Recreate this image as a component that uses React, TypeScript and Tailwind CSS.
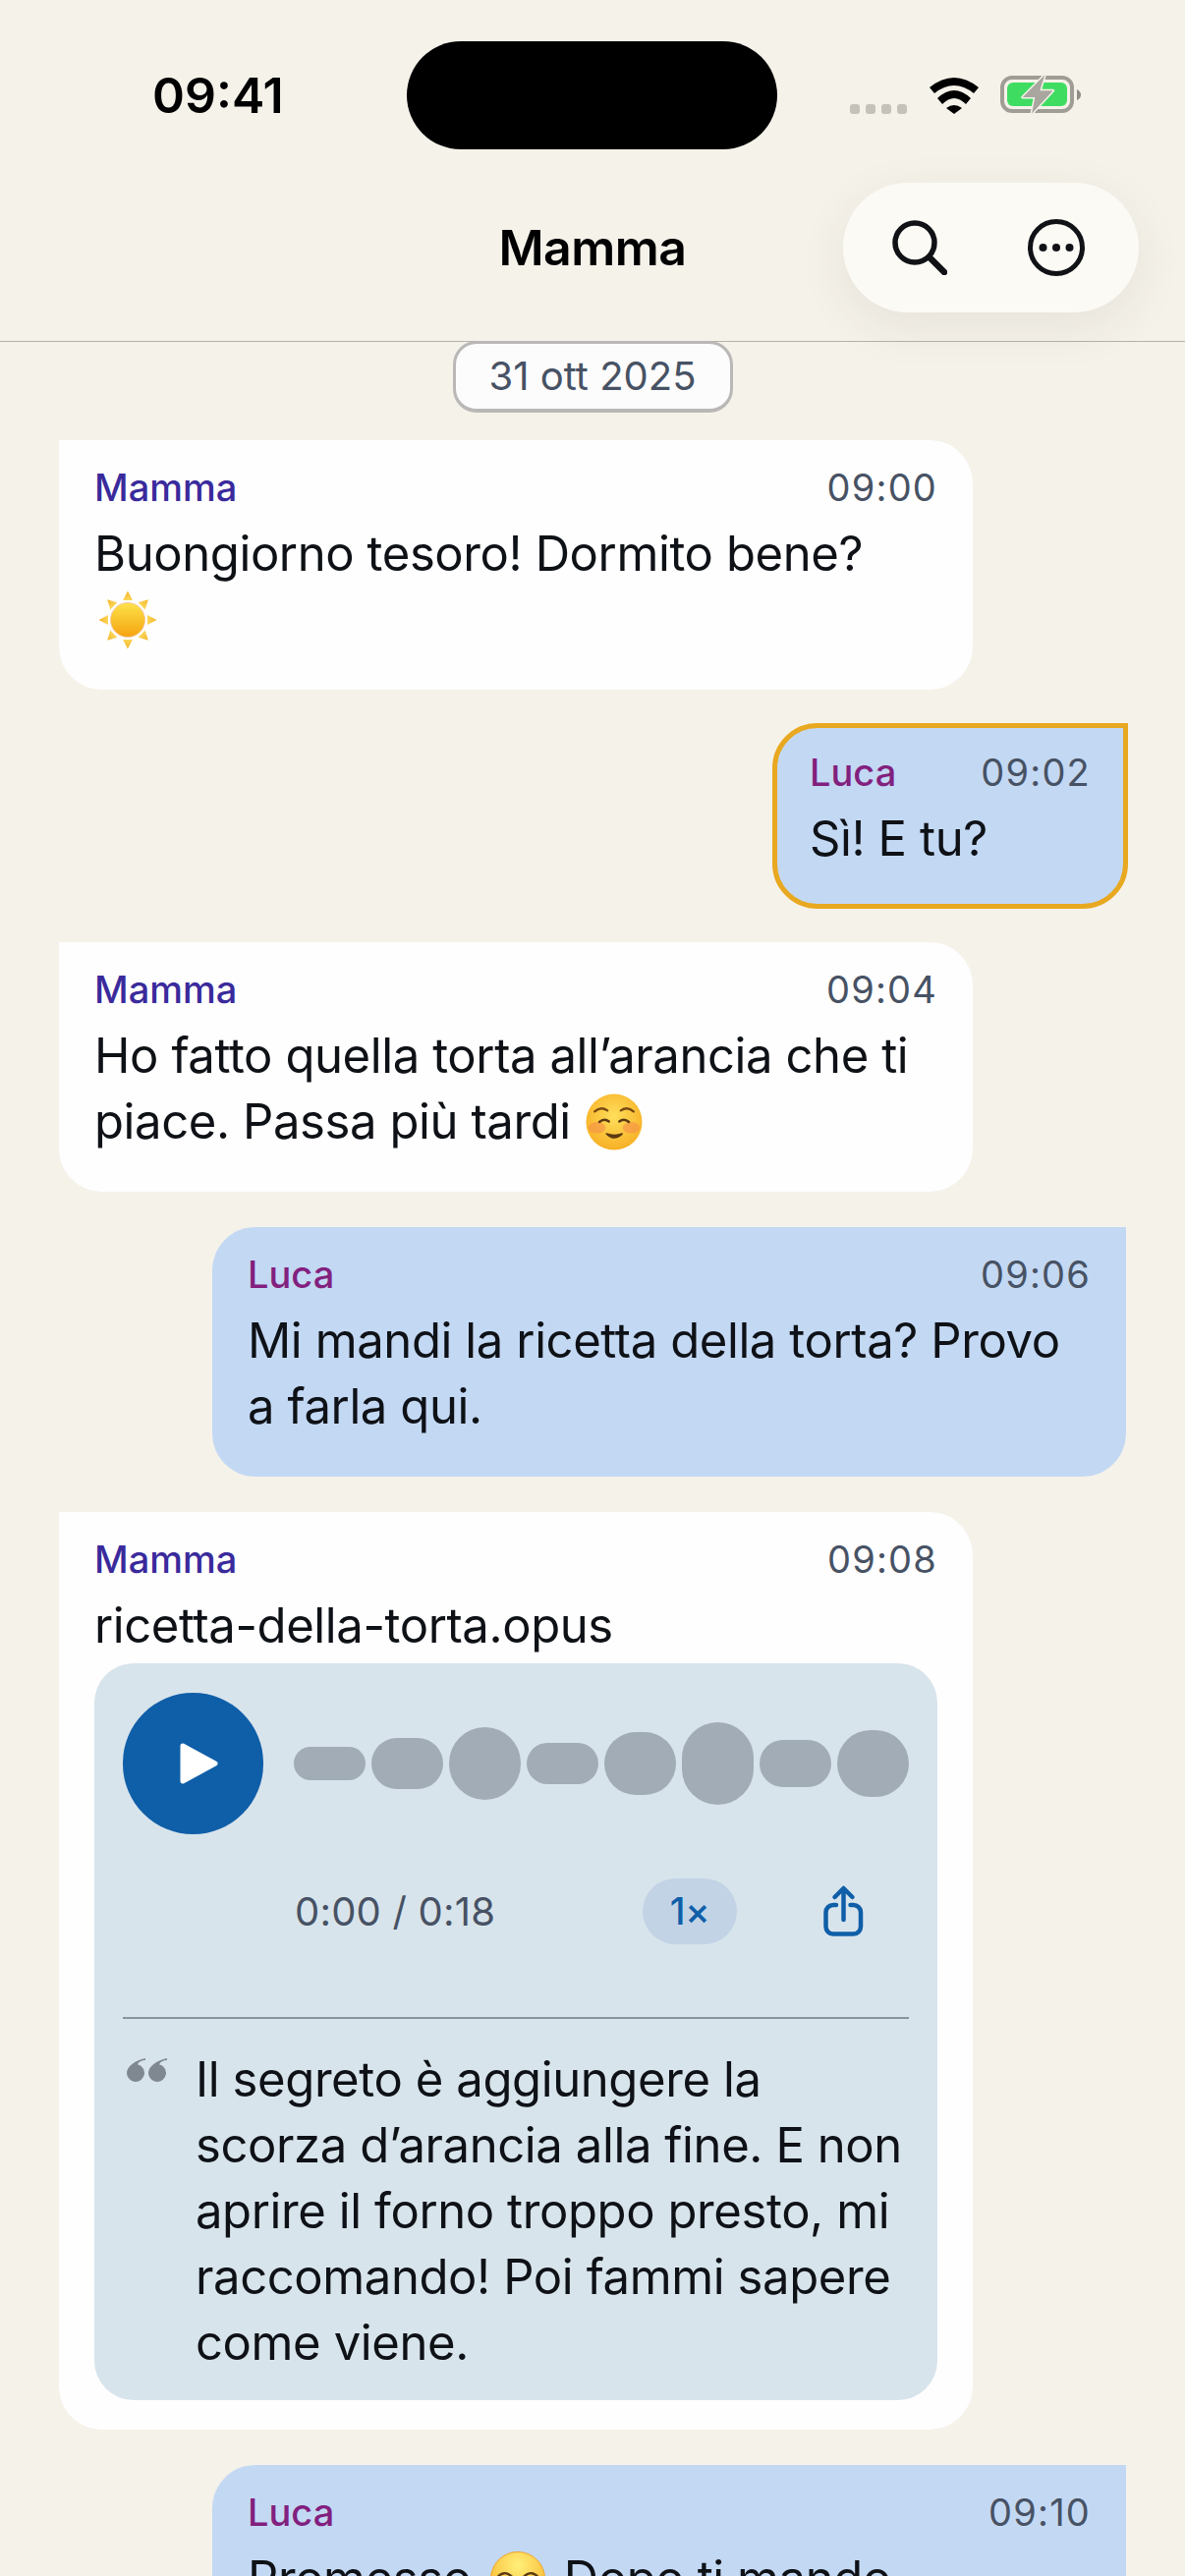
import React from "react";

const FONT = "font-['Inter','Noto_Sans',sans-serif]";
const BODY = "text-[49px] leading-[67px] tracking-[-0.4px] text-[#0e1116]";

function Sun({ className = "" }: { className?: string }) {
  const rays = [0, 45, 90, 135, 180, 225, 270, 315];
  return (
    <svg viewBox="0 0 60 60" className={className}>
      <defs>
        <linearGradient id="sunG" x1="0" y1="0" x2="0" y2="1">
          <stop offset="0" stopColor="#fde24a" />
          <stop offset="1" stopColor="#f5a30f" />
        </linearGradient>
        <linearGradient id="rayG" x1="0" y1="0" x2="0" y2="1">
          <stop offset="0" stopColor="#f6b428" />
          <stop offset="1" stopColor="#fbd65a" />
        </linearGradient>
      </defs>
      {rays.map((r) => (
        <polygon key={r} points="30,0.500 35,10 25,10" fill="url(#rayG)" transform={`rotate(${r} 30 30)`} />
      ))}
      <circle cx="30" cy="30" r="17.500" fill="url(#sunG)" stroke="#f6c9a0" strokeWidth="1" />
    </svg>
  );
}

function Relaxed({ className = "" }: { className?: string }) {
  return (
    <svg viewBox="0 0 60 60" className={className}>
      <defs>
        <radialGradient id="faceG" cx="0.5" cy="0.4" r="0.7">
          <stop offset="0" stopColor="#ffdf5c" />
          <stop offset="1" stopColor="#f6a81c" />
        </radialGradient>
      </defs>
      <circle cx="30" cy="30" r="29.500" fill="url(#faceG)" />
      <ellipse cx="12" cy="36" rx="9" ry="6" fill="#f58a4a" opacity="0.55" />
      <ellipse cx="48" cy="36" rx="9" ry="6" fill="#f58a4a" opacity="0.55" />
      <path d="M9.500 19q6.500-6 13.500-1M37 18q7-5 13.500 1" fill="none" stroke="#7a4a12" strokeWidth="2.400" strokeLinecap="round" />
      <path d="M14.500 30q5-4.500 10-.500M35.500 29.500q5-4 10 .500" fill="none" stroke="#5c3a12" strokeWidth="2.600" strokeLinecap="round" />
      <path d="M22 42.500q8 8 16.500 0q-8 3-16.500 0z" fill="#5c3a12" stroke="#5c3a12" strokeWidth="1.600" strokeLinejoin="round" />
    </svg>
  );
}

function Squint({ className = "" }: { className?: string }) {
  return (
    <svg viewBox="0 0 60 60" className={className}>
      <defs>
        <radialGradient id="faceH" cx="0.5" cy="0.25" r="0.85">
          <stop offset="0" stopColor="#fff07a" />
          <stop offset="1" stopColor="#f7a91e" />
        </radialGradient>
      </defs>
      <circle cx="30" cy="30" r="29.500" fill="url(#faceH)" stroke="#f0a020" strokeWidth="1" />
      <path d="M7 29q8-10 17-1M36 28q9-9 17 1" fill="none" stroke="#5c3a12" strokeWidth="2.600" strokeLinecap="round" />
      <path d="M12 30q7-6 12 0M36 30q6-6 12 0" fill="#5c3a12" />
      <path d="M16 40q14 12 28 0" fill="none" stroke="#5c3a12" strokeWidth="2.800" strokeLinecap="round" />
    </svg>
  );
}

function Bubble({
  who,
  time,
  children,
  highlight,
}: {
  who: "Mamma" | "Luca";
  time: string;
  children: React.ReactNode;
  highlight?: boolean;
}) {
  const mine = who === "Luca";
  return (
    <div
      className={[
        "flex flex-col px-[36px] pt-[28px]",
        mine
          ? "self-end bg-[#c3d8f3] rounded-[44px] rounded-tr-none"
          : "self-start bg-[#fefefe] rounded-[44px] rounded-tl-none",
        highlight
          ? "w-[358px] pb-[36px] outline-[5px] outline-solid outline-[#e8a820] -outline-offset-[3px]"
          : "w-[930px] pb-[38px]",
      ].join(" ")}
    >
      <div className="flex items-center justify-between text-[38px] leading-[40px]">
        <span className={mine ? "font-medium text-[#82207e]" : "font-medium text-[#3a2a9c]"}>{who}</span>
        <span className="font-normal text-[#475264] tracking-[1.2px]">{time}</span>
      </div>
      <div className={`mt-[14px] ${BODY}`}>{children}</div>
    </div>
  );
}

function Wave() {
  return (
    <div className="flex items-center gap-[6px]">
      <div className="w-[73px] h-[34px] rounded-full bg-[#a1acb6]" />
      <div className="w-[73px] h-[52px] rounded-full bg-[#a1acb6]" />
      <div className="w-[73px] h-[74px] rounded-full bg-[#a1acb6]" />
      <div className="w-[73px] h-[42px] rounded-full bg-[#a1acb6]" />
      <div className="w-[73px] h-[64px] rounded-full bg-[#a1acb6]" />
      <div className="w-[73px] h-[84px] rounded-full bg-[#a1acb6]" />
      <div className="w-[73px] h-[48px] rounded-full bg-[#a1acb6]" />
      <div className="w-[73px] h-[68px] rounded-full bg-[#a1acb6]" />
    </div>
  );
}

export default function App() {
  return (
    <div className={`${FONT} w-[1206px] h-[2622px] overflow-hidden bg-[#f5f2ea] flex flex-col`}>
      {/* status bar */}
      <div className="flex items-center h-[110px] mt-[42px] pl-[155px]">
        <div className="w-[259px] text-[50px] font-semibold text-black leading-none">09:41</div>
        <div className="w-[377px] h-[110px] rounded-[55px] bg-black" />
        <div className="flex items-center ml-[74px]">
          <div className="flex gap-[6px] mt-[28px]">
            <div className="w-[10px] h-[10px] rounded-[3px] bg-[#c5c2ba]" />
            <div className="w-[10px] h-[10px] rounded-[3px] bg-[#c5c2ba]" />
            <div className="w-[10px] h-[10px] rounded-[3px] bg-[#c5c2ba]" />
            <div className="w-[10px] h-[10px] rounded-[3px] bg-[#c5c2ba]" />
          </div>
          <svg viewBox="0 0 50 37" className="ml-[23px] w-[50px] h-[37px]" fill="#000">
            <path d="M0 10Q25-10 50 10L45 16Q25 0 5 16Z" />
            <path d="M8 21Q25 5 42 21L37 27Q25 15 13 27Z" />
            <path d="M17 31Q25 25 33 31L25 37Z" />
          </svg>
          <svg viewBox="0 0 84 42" className="ml-[22px] w-[84px] h-[42px]">
            <rect x="2" y="3" width="71" height="34" rx="10" fill="none" stroke="#a09d96" strokeWidth="4" />
            <rect x="7" y="8" width="61" height="24" rx="6" fill="#3fdc62" />
            <path d="M78 15q4 2 4 5.500t-4 5.500z" fill="#8f8c85" />
            <path
              d="M45.300 .3L22.700 23H35.300L32 39.700L53.700 16.300H40.300Z"
              fill="#a9a69f"
              stroke="#f5f2ea"
              strokeWidth="3"
              strokeLinejoin="round"
              paintOrder="stroke"
            />
          </svg>
        </div>
      </div>
      {/* header */}
      <div className="grid grid-cols-[1fr_auto_1fr] items-center px-[47px] pt-[34px] pb-[29px] border-b border-[#b5b2a9]">
        <div />
        <div className="text-[50px] font-semibold tracking-[-0.5px] text-black leading-none">Mamma</div>
        <div className="justify-self-end w-[301px] h-[132px] rounded-[66px] bg-[#fcfaf5] shadow-[0_14px_50px_rgba(60,50,30,0.08)] flex items-center justify-between pl-[50px] pr-[55px]">
          <svg viewBox="0 0 56 56" className="w-[56px] h-[56px]" fill="none" stroke="#101216" strokeWidth="5.500" strokeLinecap="round">
            <circle cx="23" cy="23" r="20" />
            <path d="M38 38l15 15" strokeWidth="6.500" />
          </svg>
          <svg viewBox="0 0 58 58" className="w-[58px] h-[58px]" fill="none">
            <circle cx="29" cy="29" r="26.500" stroke="#101216" strokeWidth="5" />
            <circle cx="15.500" cy="29" r="4" fill="#101216" />
            <circle cx="29" cy="29" r="4" fill="#101216" />
            <circle cx="42.500" cy="29" r="4" fill="#101216" />
          </svg>
        </div>
      </div>
      {/* chat */}
      <div className="flex flex-col pl-[60px] pr-[60px] gap-[36px]">
        <div className="self-center -mb-[8px] -mt-px h-[73px] w-[285px] flex items-center justify-center rounded-[24px] bg-[#fcfcfc] border-[3px] border-b-[4px] border-[#b9b8b6] text-[40px] leading-none text-[#475264]">
          31 ott 2025
        </div>
        <Bubble who="Mamma" time="09:00">
          <div>Buongiorno tesoro! Dormito bene?</div>
          <div className="h-[67px] pt-[4px] pl-[4px]">
            <Sun className="w-[60px] h-[60px]" />
          </div>
        </Bubble>
        <Bubble who="Luca" time="09:02" highlight>
          Sì! E tu?
        </Bubble>
        <Bubble who="Mamma" time="09:04">
          <div>Ho fatto quella torta all’arancia che ti</div>
          <div className="flex items-center gap-[15px]">
            <span>piace. Passa più tardi</span>
            <Relaxed className="w-[58px] h-[58px]" />
          </div>
        </Bubble>
        <Bubble who="Luca" time="09:06">
          Mi mandi la ricetta della torta? Provo a farla qui.
        </Bubble>
        <Bubble who="Mamma" time="09:08">
          <div>ricetta-della-torta.opus</div>
          <div className="mt-[5px] -mb-[8px] rounded-[40px] bg-[#d8e4ec] pl-[29px] pr-[29px] pt-[30px] pb-[25px]">
            <div className="flex items-center gap-[31px]">
              <div className="w-[144px] h-[144px] rounded-full bg-[#0f5ea8] flex items-center justify-center">
                <svg viewBox="0 0 40 44" className="w-[40px] h-[44px] ml-[12px]">
                  <path d="M3 4l33 18L3 40z" fill="#fff" stroke="#fff" strokeWidth="5" strokeLinejoin="round" />
                </svg>
              </div>
              <Wave />
            </div>
            <div className="flex items-center h-[67px] mt-[45px] pl-[175px]">
              <span className="w-[354px] text-[40px] leading-none tracking-[0.2px] text-[#475264]">0:00 / 0:18</span>
              <span className="w-[96px] h-[67px] rounded-[34px] bg-[#c2d3e6] text-[#0f5ea8] text-[38px] font-medium flex items-center justify-center">
                1×
              </span>
              <svg viewBox="0 0 80 80" className="ml-[70px] self-start -mt-[3px] w-[80px] h-[80px]" fill="none" stroke="#0f5ea8" strokeWidth="4.500" strokeLinecap="round" strokeLinejoin="round">
                <path d="M38.500 45V14M29.500 22L38.500 13L47.500 22" />
                <path d="M31 30h-3a7.500 7.500 0 0 0-7.500 7.500v14.500a7.500 7.500 0 0 0 7.500 7.500h20.500a7.500 7.500 0 0 0 7.500-7.500V37.500a7.500 7.500 0 0 0-7.500-7.500h-3" />
              </svg>
            </div>
            <div className="mt-[74px] h-[2px] bg-[#8b939d]" />
            <div className={`flex mt-[28px] ${BODY}`}>
              <svg viewBox="0 0 42 25" className="w-[42px] h-[25px] ml-[4px] mt-[11px] shrink-0" fill="#7f8790">
                <path d="M19 1C9 3 0 9 0 16a9 9 0 1 0 11-8.800C12 5 15 3 19 3Z" />
                <path d="M41 1C31 3 22 9 22 16a9 9 0 1 0 11-8.800C34 5 37 3 41 3Z" />
              </svg>
              <div className="ml-[28px]">
                Il segreto è aggiungere la scorza d’arancia alla fine. E non aprire il forno troppo presto, mi raccomando! Poi fammi sapere come viene.
              </div>
            </div>
          </div>
        </Bubble>
        <Bubble who="Luca" time="09:10">
          <div className="flex items-center gap-[19px]">
            <span>Promesso</span>
            <Squint className="w-[56px] h-[56px]" />
            <span>Dopo ti mando</span>
          </div>
        </Bubble>
      </div>
    </div>
  );
}
